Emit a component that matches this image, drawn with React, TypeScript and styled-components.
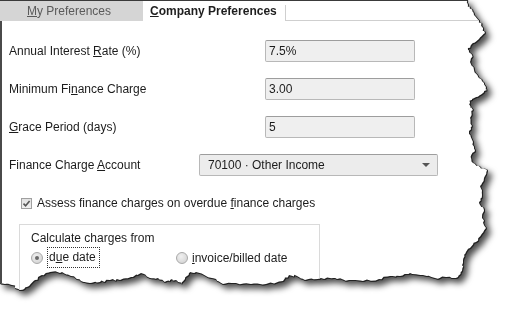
import styled, { createGlobalStyle } from "styled-components";

const GlobalStyle = createGlobalStyle`
  html, body {
    margin: 0;
    padding: 0;
    background: #ffffff;
  }
  body {
    font-family: "Liberation Sans", Arial, sans-serif;
    font-size: 12px;
    color: #1c1c1c;
  }
`;

// rough outline of the torn paper (right + bottom edges)
const tornPoints = [
  [0, 0], [467, 0], [468, 5], [471, 9], [474, 15], [479, 21], [482, 27], [485, 33],
  [479, 39], [471, 45], [468, 50], [472, 55], [470, 62], [474, 70], [478, 77],
  [484, 83], [487, 90], [480, 95], [472, 99], [469, 104], [473, 110], [470, 118],
  [472, 126], [469, 134], [473, 142], [475, 150], [471, 156], [473, 163], [480, 167],
  [487, 170], [484, 178], [480, 186], [482, 195], [479, 202], [484, 210], [482, 218],
  [486, 228], [481, 235], [476, 242], [470, 248], [464, 255], [463, 263], [462, 271],
  [458, 277], [446, 277], [435, 278], [423, 275], [410, 273], [400, 276], [390, 276],
  [379, 279], [363, 281], [349, 280], [337, 279], [330, 278], [318, 279], [305, 280],
  [297, 276], [289, 275], [283, 281], [266, 284], [251, 284], [236, 283], [223, 284],
  [216, 279], [206, 276], [196, 272], [189, 273], [185, 279], [182, 284], [176, 280],
  [170, 280], [165, 282], [158, 278], [150, 278], [141, 273], [131, 277], [120, 280],
  [110, 280], [100, 282], [90, 283], [81, 281], [71, 276], [62, 272], [50, 272],
  [42, 275], [35, 280], [27, 287], [20, 290], [12, 285], [5, 284], [0, 283],
];

// add a little fibre noise between the points
function roughen(points: number[][]) {
  let seed = 7;
  const rand = () => {
    seed = (seed * 9301 + 49297) % 233280;
    return seed / 233280;
  };
  const out: number[][] = [points[0], points[1]];
  for (let i = 1; i < points.length - 2; i++) {
    const [x1, y1] = points[i];
    const [x2, y2] = points[i + 1];
    const steps = 3;
    for (let s = 1; s <= steps; s++) {
      const t = s / (steps + 1);
      out.push([
        x1 + (x2 - x1) * t + (rand() - 0.5) * 2.2,
        y1 + (y2 - y1) * t + (rand() - 0.5) * 2.2,
      ]);
    }
    out.push(points[i + 1]);
  }
  out.push(points[points.length - 1]);
  return out.map(([x, y]) => `${x.toFixed(1)}px ${y.toFixed(1)}px`).join(", ");
}

const tornEdge = roughen(tornPoints);

const Page = styled.div`
  width: 511px;
  height: 316px;
  overflow: hidden;
  background: #ffffff;
`;

const Paper = styled.div`
  filter: drop-shadow(1px 0 0 #222) drop-shadow(0 1px 0 #222)
    drop-shadow(4px 4px 3px rgba(0, 0, 0, 0.7));
`;

const Sheet = styled.div<{ $edge: string }>`
  height: 300px;
  background: #ffffff;
  border-left: 2px solid #4a4a4a;
  clip-path: polygon(${(p) => p.$edge});
`;

const TabBar = styled.div`
  display: flex;
  height: 20px;
  border-top: 1px solid #3a3a3a;
  margin-left: -2px;
`;

const Tab = styled.div<{ $active?: boolean }>`
  width: ${(p) => (p.$active ? "142px" : "143px")};
  display: flex;
  align-items: center;
  justify-content: flex-start;
  padding-left: ${(p) => (p.$active ? "7px" : "27px")};
  box-sizing: border-box;
  background: ${(p) => (p.$active ? "#ffffff" : "#d5d5d5")};
  color: ${(p) => (p.$active ? "#1e1e1e" : "#5a5a5a")};
  font-weight: ${(p) => (p.$active ? "bold" : "normal")};
  font-size: 12px;
`;

const TabFiller = styled.div`
  flex: 1;
  margin-top: 4px;
  border-left: 1px solid #cfcfcf;
  border-bottom: 1px solid #cfcfcf;
`;

const Key = styled.span`
  text-decoration: underline;
  text-underline-offset: 1px;
`;

const Body = styled.div`
  padding: 19px 0 0 7px;
  display: flex;
  flex-direction: column;
`;

const Fields = styled.div`
  display: flex;
  flex-direction: column;
  gap: 16px;
`;

const Row = styled.div<{ $labelWidth: number }>`
  display: grid;
  grid-template-columns: ${(p) => p.$labelWidth}px auto;
  align-items: center;
  height: 22px;
`;

const Label = styled.span`
  color: #1c1c1c;
`;

const TextBox = styled.div`
  width: 150px;
  height: 22px;
  box-sizing: border-box;
  padding: 0 3px;
  display: flex;
  align-items: center;
  background: #efefef;
  border: 1px solid #b8b8b8;
  border-top-color: #9d9d9d;
  border-radius: 2px;
  color: #1c1c1c;
`;

const Select = styled(TextBox)`
  width: 239px;
  padding: 0 7px 0 8px;
  justify-content: space-between;
  background: #ececec;
`;

const Arrow = styled.span`
  width: 0;
  height: 0;
  border-left: 4px solid transparent;
  border-right: 4px solid transparent;
  border-top: 4px solid #555555;
`;

const CheckRow = styled.div`
  display: flex;
  align-items: center;
  gap: 5px;
  margin-top: 21px;
  padding-left: 12px;
  height: 12px;
`;

const CheckBox = styled.span`
  width: 11px;
  height: 11px;
  box-sizing: border-box;
  border: 1px solid #a0a0a0;
  background: linear-gradient(#e2e2e2, #f0f0f0);
  display: flex;
  align-items: center;
  justify-content: center;
`;

const Group = styled.div`
  margin: 15px 0 0 10px;
  width: 301px;
  height: 80px;
  box-sizing: border-box;
  border: 1px solid #dadada;
  padding: 6px 0 0 11px;
  display: flex;
  flex-direction: column;
  gap: 2px;
`;

const RadioRow = styled.div`
  display: flex;
  align-items: center;
`;

const RadioOption = styled.div<{ $width?: number }>`
  display: flex;
  align-items: center;
  gap: 4px;
  width: ${(p) => (p.$width ? `${p.$width}px` : "auto")};
`;

const Radio = styled.span<{ $checked?: boolean }>`
  width: 12px;
  height: 12px;
  box-sizing: border-box;
  border-radius: 50%;
  border: 1px solid #a8a8a8;
  background: radial-gradient(circle at 40% 35%, #f0f0f0, #cfcfcf);
  display: flex;
  align-items: center;
  justify-content: center;

  &::after {
    content: "";
    display: ${(p) => (p.$checked ? "block" : "none")};
    width: 4px;
    height: 4px;
    border-radius: 50%;
    background: #6a6a6a;
  }
`;

const FocusLabel = styled.span`
  border: 1px dotted #333333;
  padding: 3px 3px 3px 1px;
  line-height: 13px;
`;

export default function App() {
  return (
    <Page>
      <GlobalStyle />
      <Paper>
        <Sheet $edge={tornEdge}>
          <TabBar>
            <Tab>
              <span>
                <Key>M</Key>y Preferences
              </span>
            </Tab>
            <Tab $active>
              <span>
                <Key>C</Key>ompany Preferences
              </span>
            </Tab>
            <TabFiller />
          </TabBar>

          <Body>
            <Fields>
              <Row $labelWidth={256}>
                <Label>
                  Annual Interest <Key>R</Key>ate (%)
                </Label>
                <TextBox>7.5%</TextBox>
              </Row>
              <Row $labelWidth={256}>
                <Label>
                  Minimum Fi<Key>n</Key>ance Charge
                </Label>
                <TextBox>3.00</TextBox>
              </Row>
              <Row $labelWidth={256}>
                <Label>
                  <Key>G</Key>race Period (days)
                </Label>
                <TextBox>5</TextBox>
              </Row>
              <Row $labelWidth={190}>
                <Label>
                  Finance Charge <Key>A</Key>ccount
                </Label>
                <Select>
                  <span>70100 · Other Income</span>
                  <Arrow />
                </Select>
              </Row>
            </Fields>

            <CheckRow>
              <CheckBox>
                <svg width="9" height="9" viewBox="0 0 9 9">
                  <path d="M1.5 4.6 L3.6 6.7 L7.6 2" fill="none" stroke="#555" strokeWidth="1.6" />
                </svg>
              </CheckBox>
              <Label>
                Assess finance charges on overdue <Key>f</Key>inance charges
              </Label>
            </CheckRow>

            <Group>
              <Label>Calculate charges from</Label>
              <RadioRow>
                <RadioOption $width={145}>
                  <Radio $checked />
                  <FocusLabel>
                    d<Key>u</Key>e date
                  </FocusLabel>
                </RadioOption>
                <RadioOption>
                  <Radio />
                  <Label>
                    <Key>i</Key>nvoice/billed date
                  </Label>
                </RadioOption>
              </RadioRow>
            </Group>
          </Body>
        </Sheet>
      </Paper>
    </Page>
  );
}
